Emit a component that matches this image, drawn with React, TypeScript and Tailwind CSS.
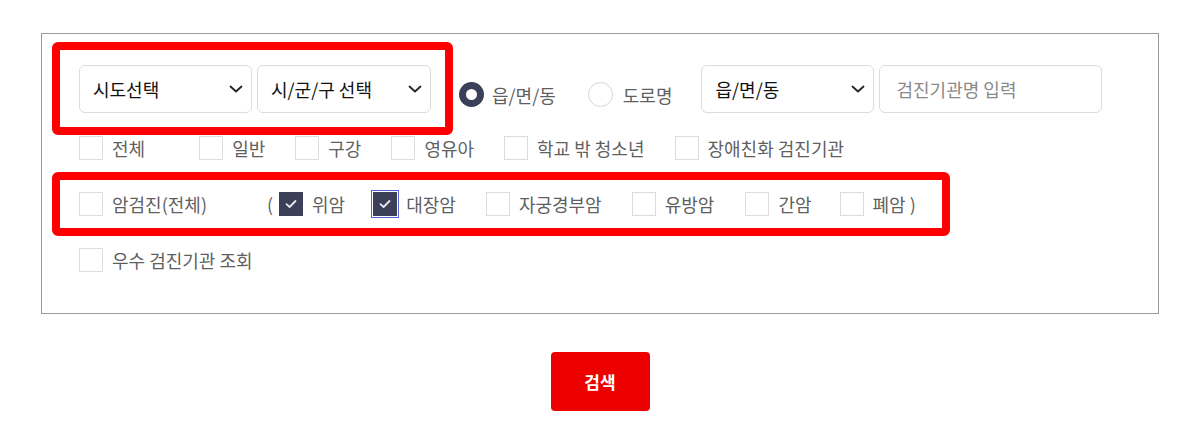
import React from "react";

function Chevron() {
  return (
    <svg width="14" height="8" viewBox="0 0 14 8" fill="none" className="shrink-0">
      <path d="M1.5 1.5 L7 6.5 L12.5 1.5" stroke="#222" strokeWidth="1.8" strokeLinecap="round" strokeLinejoin="round" />
    </svg>
  );
}

function Select({ label, w }: { label: string; w: string }) {
  return (
    <div className={`${w} h-[48px] border border-[#dcdcdc] rounded-[6px] bg-white flex items-center justify-between pl-[13px] pr-[8px]`}>
      <span className="text-[18px] font-normal text-[#111]">{label}</span>
      <Chevron />
    </div>
  );
}

function Box({ checked = false, focus = false }: { checked?: boolean; focus?: boolean }) {
  return (
    <span
      className={`w-[24px] h-[24px] shrink-0 flex items-center justify-center border ${
        checked ? "bg-[#3c3f58] border-[#3c3f58]" : "bg-white border-[#dddddd]"
      } ${focus ? "outline outline-1 outline-[#5563d8] outline-offset-[1px]" : ""}`}
    >
      {checked && (
        <svg width="14" height="14" viewBox="0 0 14 14" fill="none">
          <path d="M2.5 7.2 L5.6 10 L11.5 4" stroke="#e8e8ee" strokeWidth="1.8" strokeLinecap="round" strokeLinejoin="round" />
        </svg>
      )}
    </span>
  );
}

function Item({ label, checked, focus, className = "" }: { label: string; checked?: boolean; focus?: boolean; className?: string }) {
  return (
    <div className={`flex items-center gap-[9px] ${className}`}>
      <Box checked={checked} focus={focus} />
      <span className="text-[18px] text-[#5f5f5f] leading-none whitespace-pre">{label}</span>
    </div>
  );
}

export default function App() {
  return (
    <div className="relative w-[1200px] h-[444px] bg-white font-['Noto_Sans_CJK_KR','Noto_Sans',sans-serif]">
      <div className="pt-[33px] px-[41px]">
        <div className="border border-[#9a9a9a] h-[281px] pl-[37px] pt-[31px]">
          {/* Row 1 */}
          <div className="flex items-start h-[48px]">
            <Select label="시도선택" w="w-[173px]" />
            <div className="ml-[5px]">
              <Select label="시/군/구 선택" w="w-[174px]" />
            </div>
            <div className="ml-[28px] mt-[17px] flex items-center">
              <span className="w-[25px] h-[25px] rounded-full border-[7px] border-[#3c3f58] bg-white shrink-0" />
              <span className="ml-[8px] text-[18px] text-[#5f5f5f] leading-none">읍/면/동</span>
              <span className="ml-[32px] w-[25px] h-[25px] rounded-full border border-[#d6d6d6] bg-white shrink-0" />
              <span className="ml-[10px] text-[18px] text-[#5f5f5f] leading-none">도로명</span>
            </div>
            <div className="ml-[29px]">
              <Select label="읍/면/동" w="w-[173px]" />
            </div>
            <div className="ml-[5px] w-[223px] h-[48px] border border-[#dcdcdc] rounded-[6px] bg-white flex items-center pl-[16px]">
              <span className="text-[18px] text-[#8a8a8a]">검진기관명 입력</span>
            </div>
          </div>

          {/* Row 2 */}
          <div className="mt-[23px] flex items-center h-[24px] gap-[30px]">
            <Item label="전체" className="mr-[24px]" />
            <Item label="일반" />
            <Item label="구강" />
            <Item label="영유아" />
            <Item label="학교 밖 청소년" />
            <Item label="장애친화 검진기관" />
          </div>

          {/* Row 3 */}
          <div className="mt-[32px] flex items-center h-[24px]">
            <Item label="암검진(전체)" />
            <span className="ml-[60px] text-[18px] text-[#5f5f5f] leading-none">(</span>
            <Item label="위암" checked className="ml-[6px]" />
            <Item label="대장암" checked focus className="ml-[28px]" />
            <Item label="자궁경부암" className="ml-[30px]" />
            <Item label="유방암" className="ml-[30px]" />
            <Item label="간암" className="ml-[31px]" />
            <Item label="폐암 )" className="ml-[28px]" />
          </div>

          {/* Row 4 */}
          <div className="mt-[32px] flex items-center h-[24px]">
            <Item label="우수 검진기관 조회" />
          </div>
        </div>

        <div className="mt-[38px] flex justify-center">
          <button className="w-[99px] h-[59px] rounded-[4px] bg-[#ec0000] text-white text-[17px] font-bold">
            검색
          </button>
        </div>
      </div>

      {/* annotation overlays */}
      <div className="absolute left-[52px] top-[42px] w-[401px] h-[93px] border-[8px] border-[#ff0000] rounded-[6px] pointer-events-none" />
      <div className="absolute left-[52px] top-[172px] w-[898px] h-[64px] border-[8px] border-[#ff0000] rounded-[6px] pointer-events-none" />
    </div>
  );
}
